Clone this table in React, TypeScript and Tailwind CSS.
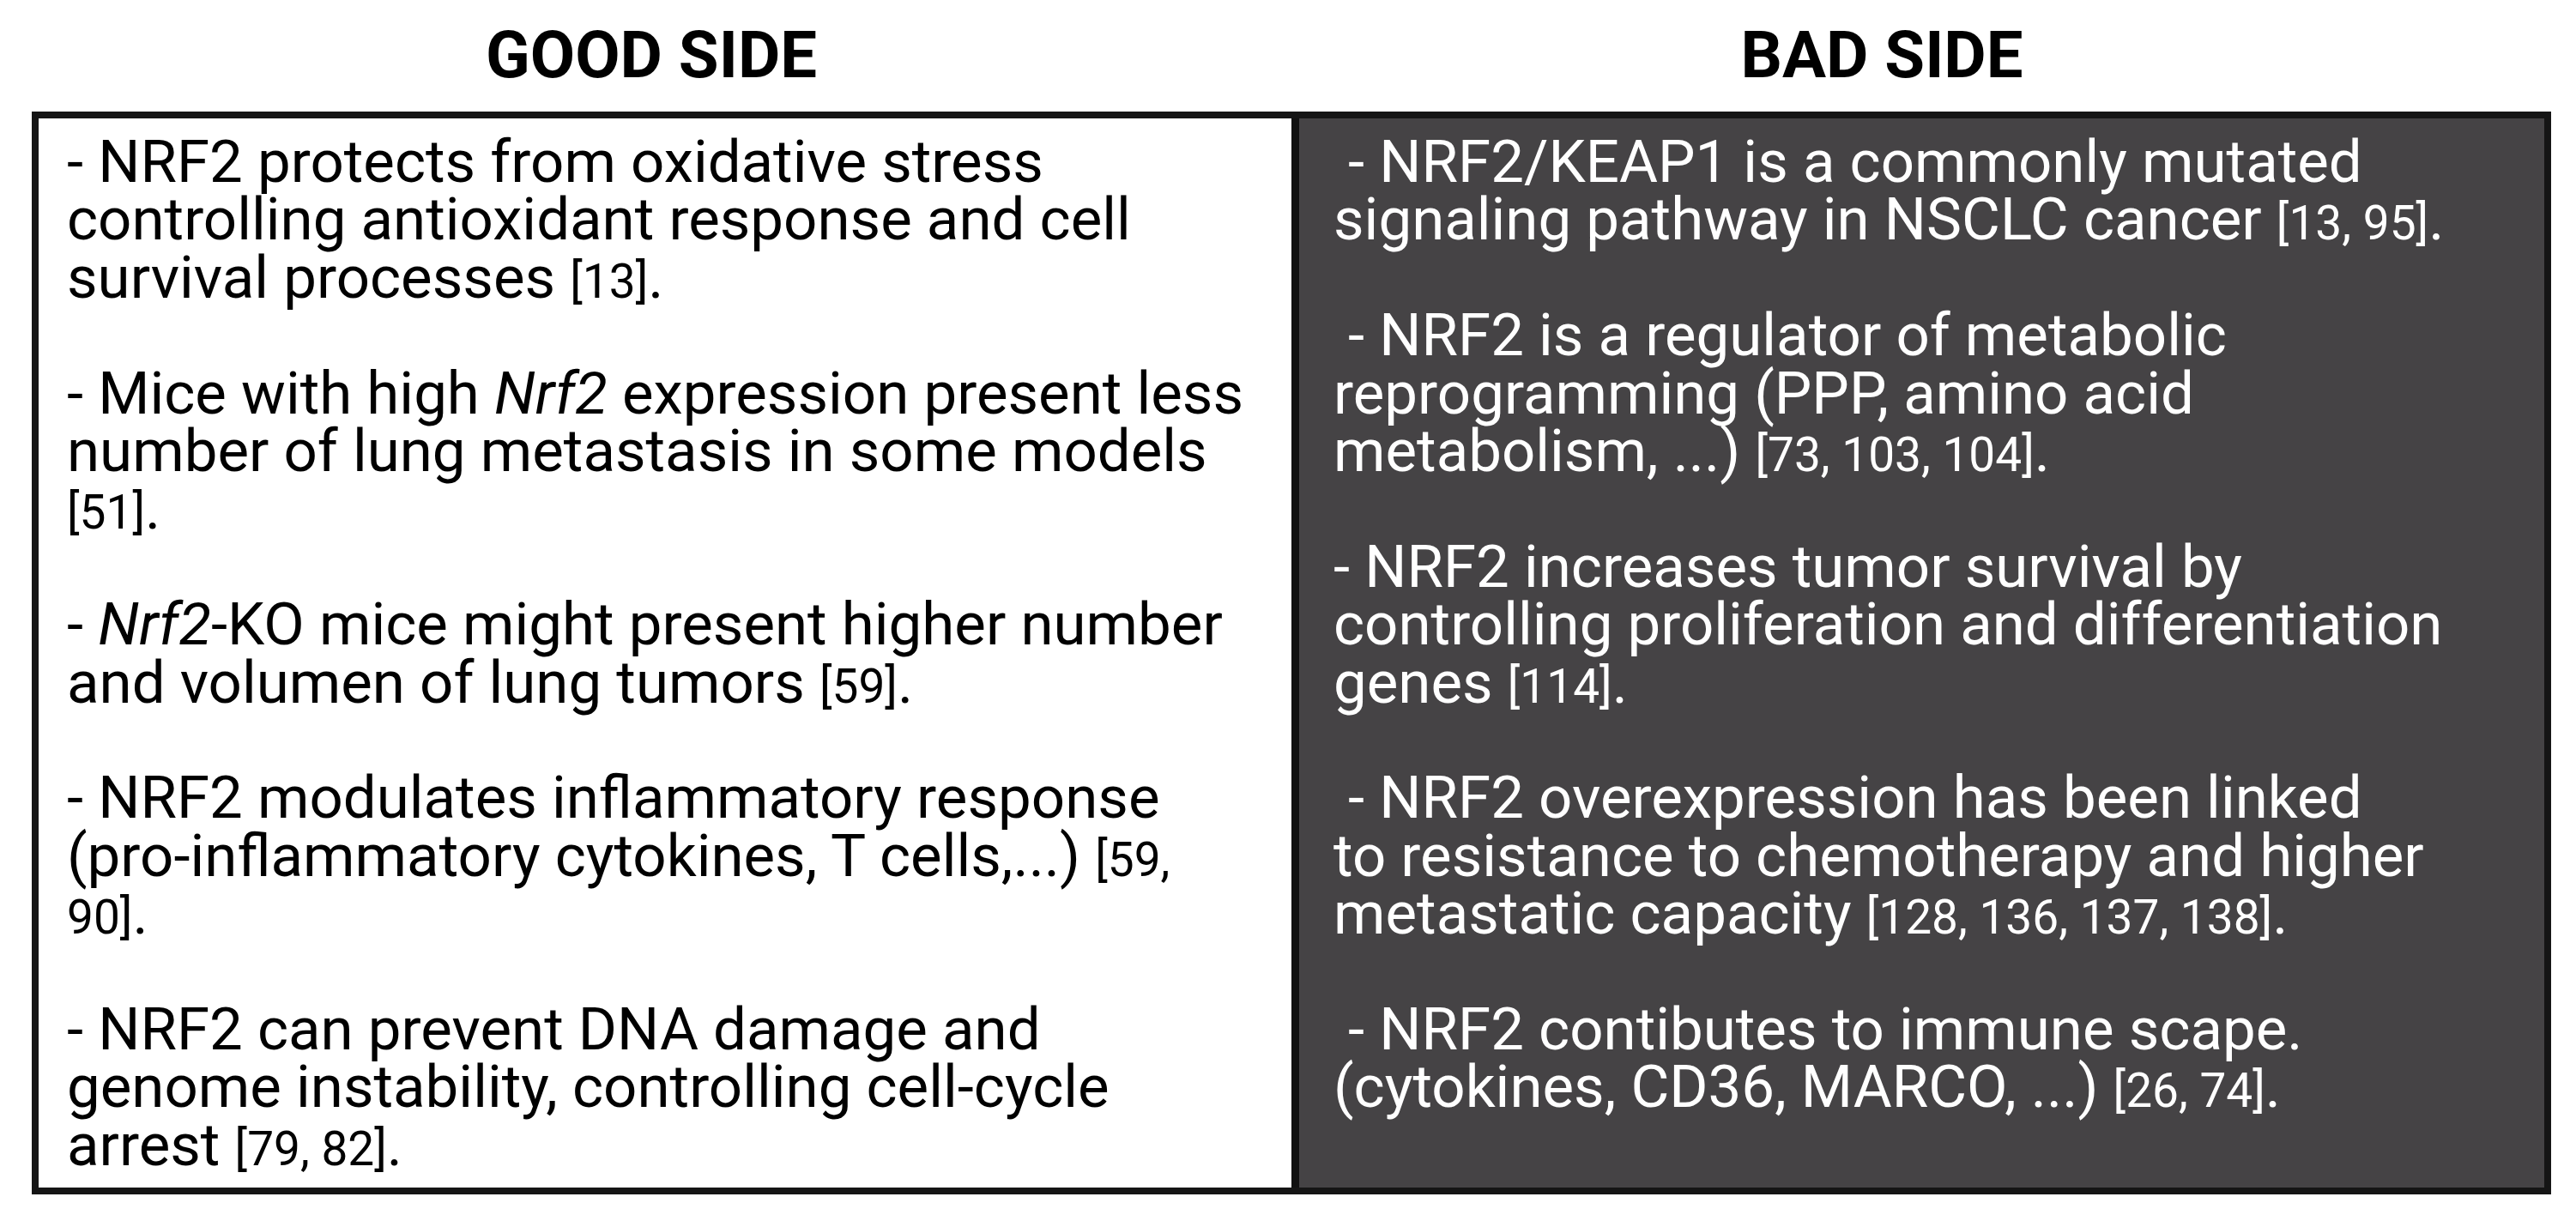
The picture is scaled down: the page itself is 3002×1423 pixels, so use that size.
import type { ReactNode } from 'react'

const Ref = ({ children }: { children: ReactNode }) => (
  <span className="text-[55px] leading-none">{children}</span>
)

const Em = ({ children }: { children: ReactNode }) => <span className="italic">{children}</span>

// each paragraph is a list of lines, broken exactly as in the figure
const goodSide: ReactNode[][] = [
  [
    '- NRF2 protects from oxidative stress',
    'controlling antioxidant response and cell',
    <>survival processes <Ref>[13]</Ref>.</>,
  ],
  [
    <>- Mice with high <Em>Nrf2</Em> expression present less</>,
    'number of lung metastasis in some models',
    <><Ref>[51]</Ref>.</>,
  ],
  [
    <>- <Em>Nrf2</Em>-KO mice might present higher number</>,
    <>and volumen of lung tumors <Ref>[59]</Ref>.</>,
  ],
  [
    '- NRF2 modulates inflammatory response',
    <>(pro-inflammatory cytokines, T cells,...) <Ref>[59,</Ref></>,
    <><Ref>90]</Ref>.</>,
  ],
  [
    '- NRF2 can prevent DNA damage and',
    'genome instability, controlling cell-cycle',
    <>arrest <Ref>[79, 82]</Ref>.</>,
  ],
]

const badSide: ReactNode[][] = [
  [
    ' - NRF2/KEAP1 is a commonly mutated',
    <>signaling pathway in NSCLC cancer <Ref>[13, 95]</Ref>.</>,
  ],
  [
    ' - NRF2 is a regulator of metabolic',
    'reprogramming (PPP, amino acid',
    <>metabolism, ...) <Ref>[73, 103, 104]</Ref>.</>,
  ],
  [
    '- NRF2 increases tumor survival by',
    'controlling proliferation and differentiation',
    <>genes <Ref>[114]</Ref>.</>,
  ],
  [
    ' - NRF2 overexpression has been linked',
    'to resistance to chemotherapy and higher',
    <>metastatic capacity <Ref>[128, 136, 137, 138]</Ref>.</>,
  ],
  [
    ' - NRF2 contibutes to immune scape.',
    <>(cytokines, CD36, MARCO, ...) <Ref>[26, 74]</Ref>.</>,
  ],
]

const Column = ({ paragraphs }: { paragraphs: ReactNode[][] }) => (
  <div className="flex flex-col gap-[67.4px]">
    {paragraphs.map((lines, i) => (
      <p key={i}>
        {lines.map((line, j) => (
          <span key={j} className="block whitespace-pre">
            {line}
          </span>
        ))}
      </p>
    ))}
  </div>
)

export default function App() {
  return (
    <div className="w-[3002px] h-[1423px] bg-white font-['Roboto',sans-serif] overflow-hidden">
      {/* Titles */}
      <div className="ml-[37px] w-[2936px] h-[130px] grid grid-cols-2 pt-[26px] text-[76px] leading-none font-bold text-black">
        <h2 className="text-center pr-[24px]">GOOD SIDE</h2>
        <h2 className="text-center pr-[92px]">BAD SIDE</h2>
      </div>

      {/* Table */}
      <div className="ml-[37px] w-[2936px] h-[1262px] border-[8px] border-[#151515] grid grid-cols-2 text-[69px] leading-[67.4px]">
        <div className="bg-white text-black pl-[33px] pt-[17px]">
          <Column paragraphs={goodSide} />
        </div>
        <div className="bg-[#454345] text-white border-l-[9px] border-[#111111] pl-[40px] pt-[17px]">
          <Column paragraphs={badSide} />
        </div>
      </div>
    </div>
  )
}
